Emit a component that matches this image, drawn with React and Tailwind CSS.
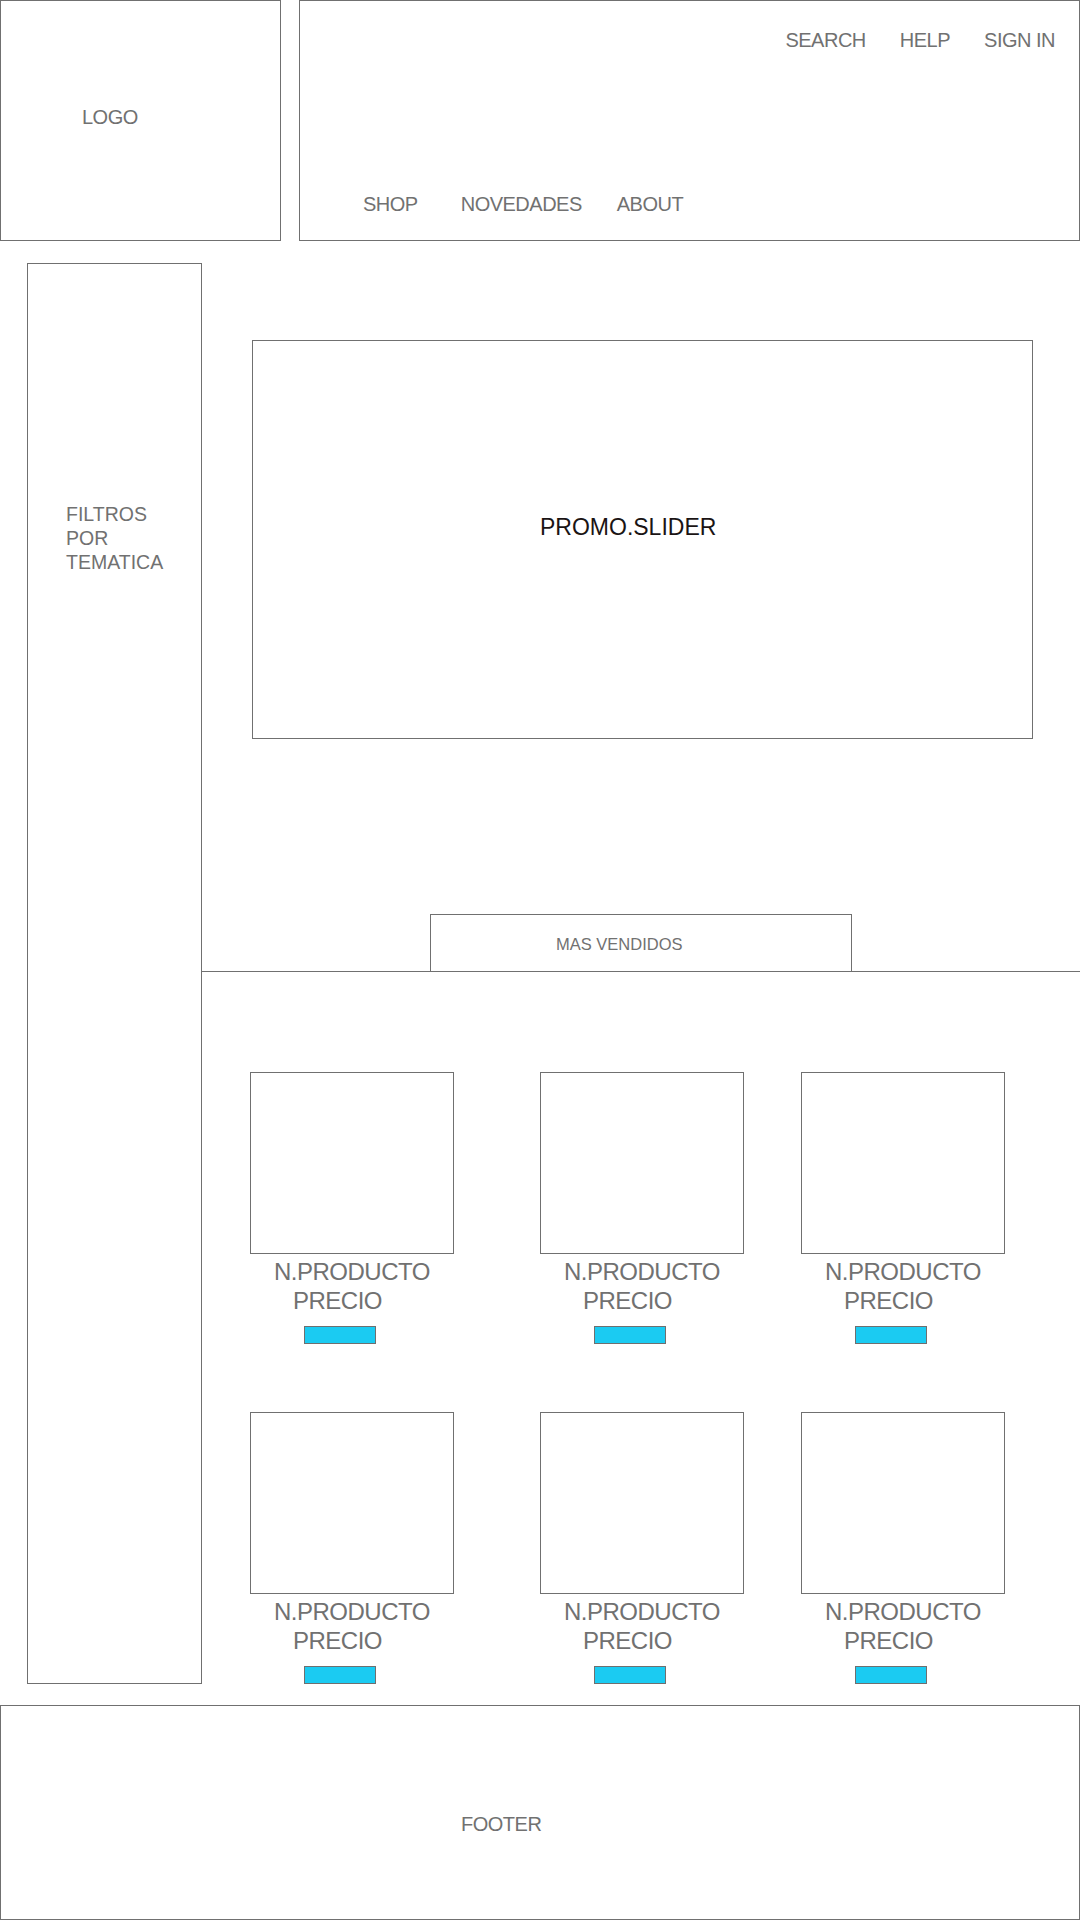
const NAV_TOP = ['SEARCH', 'HELP', 'SIGN IN']

// product rows: left margin of each card inside the main column
const COLS = ['ml-[48px]', 'ml-[86px]', 'ml-[57px]']

function ProductCard({ className }) {
  return (
    <div className={`w-[204px] ${className}`}>
      <div className="h-[182px] border border-[#707070]" />
      <div className="mt-[3px] text-[24px] leading-[29px] tracking-[-0.5px] text-[#717171]">
        <p className="pl-[24px]">N.PRODUCTO</p>
        <p className="pl-[43px]">PRECIO</p>
      </div>
      <div className="mt-[11px] ml-[54px] w-[72px] h-[18px] bg-[#1bcbf2] border border-[#6f6f6f]" />
    </div>
  )
}

function ProductRow({ className = '' }) {
  return (
    <div className={`flex ${className}`}>
      {COLS.map((c, i) => <ProductCard key={i} className={c} />)}
    </div>
  )
}

export default function App() {
  return (
    <div className="w-[1080px] h-[1920px] bg-white font-['Liberation_Sans',Arial,sans-serif] text-[#717171] overflow-hidden">
      {/* Header */}
      <header className="flex gap-[18px] h-[241px]">
        <div className="w-[281px] h-full border border-[#707070] pl-[81px] pt-[104px]">
          <span className="text-[20px] leading-[24px] tracking-[-0.5px]">LOGO</span>
        </div>
        <div className="flex-1 h-full border border-[#707070] pt-[27px]">
          <nav className="flex justify-end gap-[34px] pr-[24px] text-[20px] leading-[24px] tracking-[-0.5px]">
            {NAV_TOP.map(t => <a key={t}>{t}</a>)}
          </nav>
          <nav className="flex mt-[140px] text-[20px] leading-[24px] tracking-[-0.5px]">
            <a className="ml-[63px]">SHOP</a>
            <a className="ml-[43px]">NOVEDADES</a>
            <a className="ml-[35px]">ABOUT</a>
          </nav>
        </div>
      </header>

      {/* Body */}
      <div className="flex pt-[22px] pl-[27px]">
        <aside className="w-[175px] h-[1421px] border border-[#707070] pl-[38px] pt-[238px]">
          <p className="text-[19.5px] leading-[24px]">FILTROS<br />POR<br />TEMATICA</p>
        </aside>

        <main className="flex-1">
          <div className="mt-[77px] ml-[50px] w-[781px] h-[399px] border border-[#707070] pl-[287px] pt-[172px]">
            <span className="text-[23px] leading-[28px] text-[#1a1414]">PROMO.SLIDER</span>
          </div>

          <div className="mt-[175px] border-b border-[#707070]">
            <div className="ml-[228px] w-[422px] h-[57px] border-t border-l border-r border-[#707070] flex items-center pl-[125px]">
              <span className="text-[16.5px] leading-[20px] mt-[1px]">MAS VENDIDOS</span>
            </div>
          </div>

          <ProductRow className="mt-[100px]" />
          <ProductRow className="mt-[68px]" />
        </main>
      </div>

      {/* Footer */}
      <footer className="mt-[21px] h-[215px] border border-[#707070] pl-[460px] pt-[106px]">
        <span className="text-[20px] leading-[24px] tracking-[-0.5px]">FOOTER</span>
      </footer>
    </div>
  )
}
